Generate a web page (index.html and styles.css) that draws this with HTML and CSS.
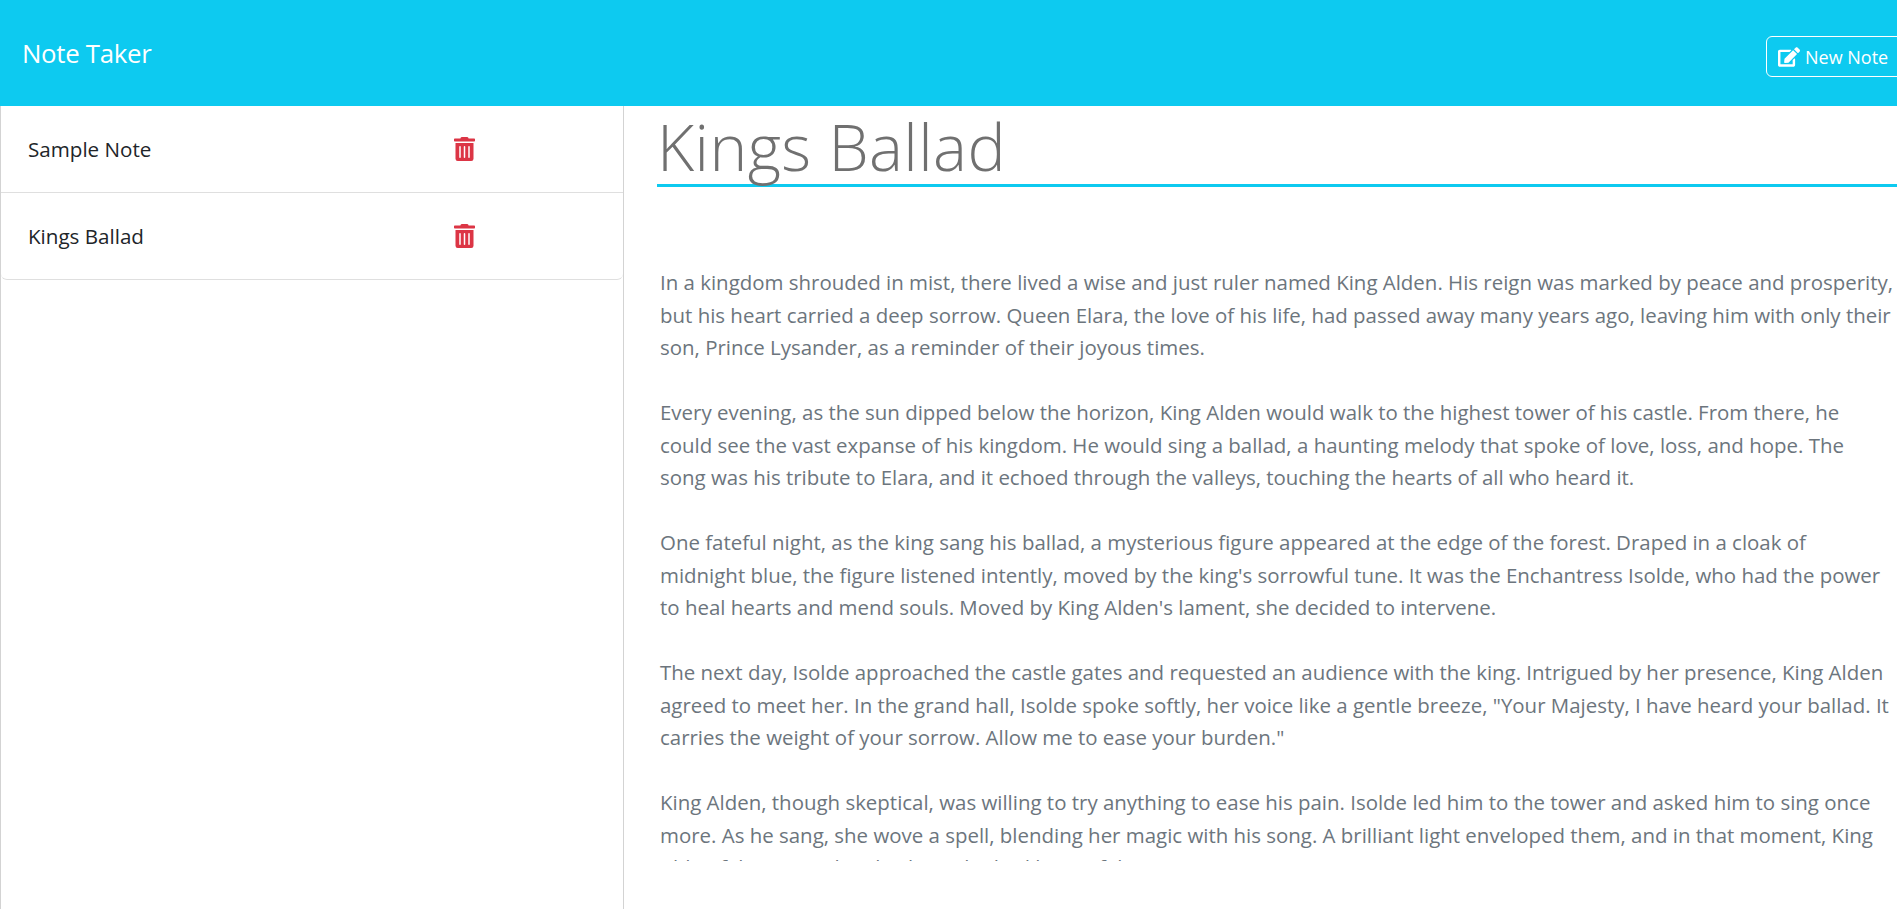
FILE: index.html
```html
<!doctype html>
<html lang="en">
  <head>
    <meta charset="utf-8" />
    <meta name="viewport" content="width=device-width" />
    <title>Note Taker</title>
    <link rel="stylesheet" href="styles.css">
  </head>
  <body>
    <nav class="navbar">
      <a class="brand" href="#">Note Taker</a>
      <button class="new-note" type="button">
        <svg class="icon-pen" viewBox="0 0 576 512" aria-hidden="true">
          <path fill="currentColor" d="M402.6 83.2l90.2 90.2c3.8 3.8 3.8 10 0 13.8L274.4 405.6l-92.8 10.3c-12.4 1.4-22.9-9.1-21.5-21.5l10.3-92.8L388.8 83.2c3.8-3.8 10-3.8 13.8 0zm162-22.9l-48.8-48.8c-15.2-15.2-39.9-15.2-55.2 0l-35.4 35.4c-3.8 3.8-3.8 10 0 13.8l90.2 90.2c3.8 3.8 10 3.8 13.8 0l35.4-35.4c15.2-15.3 15.2-40 0-55.2zM384 346.2V448H64V128h229.8c3.2 0 6.2-1.3 8.5-3.5l40-40c7.6-7.6 2.2-20.5-8.5-20.5H48C21.5 64 0 85.5 0 112v352c0 26.5 21.5 48 48 48h352c26.5 0 48-21.5 48-48V306.2c0-10.7-12.9-16-20.5-8.5l-40 40c-2.2 2.3-3.5 5.3-3.5 8.5z"/>
        </svg>
        New Note
      </button>
    </nav>
    <div class="content">
      <aside class="sidebar">
        <ul class="note-list">
          <li class="note-item">
            <span class="note-name">Sample Note</span>
            <svg class="icon-trash" viewBox="0 0 448 512" aria-hidden="true">
              <path fill="currentColor" d="M32 464a48 48 0 0 0 48 48h288a48 48 0 0 0 48-48V128H32zm272-256a16 16 0 0 1 32 0v224a16 16 0 0 1-32 0zm-96 0a16 16 0 0 1 32 0v224a16 16 0 0 1-32 0zm-96 0a16 16 0 0 1 32 0v224a16 16 0 0 1-32 0zM432 32H312l-9.4-18.7A24 24 0 0 0 281.1 0H166.8a23.72 23.72 0 0 0-21.4 13.3L136 32H16A16 16 0 0 0 0 48v32a16 16 0 0 0 16 16h416a16 16 0 0 0 16-16V48a16 16 0 0 0-16-16z"/>
            </svg>
          </li>
          <li class="note-item">
            <span class="note-name">Kings Ballad</span>
            <svg class="icon-trash" viewBox="0 0 448 512" aria-hidden="true">
              <path fill="currentColor" d="M32 464a48 48 0 0 0 48 48h288a48 48 0 0 0 48-48V128H32zm272-256a16 16 0 0 1 32 0v224a16 16 0 0 1-32 0zm-96 0a16 16 0 0 1 32 0v224a16 16 0 0 1-32 0zm-96 0a16 16 0 0 1 32 0v224a16 16 0 0 1-32 0zM432 32H312l-9.4-18.7A24 24 0 0 0 281.1 0H166.8a23.72 23.72 0 0 0-21.4 13.3L136 32H16A16 16 0 0 0 0 48v32a16 16 0 0 0 16 16h416a16 16 0 0 0 16-16V48a16 16 0 0 0-16-16z"/>
            </svg>
          </li>
        </ul>
      </aside>
      <main class="editor">
        <h1 class="note-title">Kings Ballad</h1>
        <div class="note-body">
          <p>In a kingdom shrouded in mist, there lived a wise and just ruler named King Alden. His reign was marked by peace and prosperity,<br>but his heart carried a deep sorrow. Queen Elara, the love of his life, had passed away many years ago, leaving him with only their<br>son, Prince Lysander, as a reminder of their joyous times.</p>
          <p>Every evening, as the sun dipped below the horizon, King Alden would walk to the highest tower of his castle. From there, he<br>could see the vast expanse of his kingdom. He would sing a ballad, a haunting melody that spoke of love, loss, and hope. The<br>song was his tribute to Elara, and it echoed through the valleys, touching the hearts of all who heard it.</p>
          <p>One fateful night, as the king sang his ballad, a mysterious figure appeared at the edge of the forest. Draped in a cloak of<br>midnight blue, the figure listened intently, moved by the king's sorrowful tune. It was the Enchantress Isolde, who had the power<br>to heal hearts and mend souls. Moved by King Alden's lament, she decided to intervene.</p>
          <p>The next day, Isolde approached the castle gates and requested an audience with the king. Intrigued by her presence, King Alden<br>agreed to meet her. In the grand hall, Isolde spoke softly, her voice like a gentle breeze, "Your Majesty, I have heard your ballad. It<br>carries the weight of your sorrow. Allow me to ease your burden."</p>
          <p>King Alden, though skeptical, was willing to try anything to ease his pain. Isolde led him to the tower and asked him to sing once<br>more. As he sang, she wove a spell, blending her magic with his song. A brilliant light enveloped them, and in that moment, King<br>Alden felt a warmth in his heart he had lost. It felt i</p>
        </div>
      </main>
    </div>
  </body>
</html>
```

FILE: styles.css
```css
*, *::before, *::after {
  box-sizing: border-box;
}

html, body {
  margin: 0;
  padding: 0;
  height: 100%;
  overflow: hidden;
}

body {
  font-family: "Open Sans", "Liberation Sans", sans-serif;
  color: #212529;
  background: #fff;
}

.navbar {
  display: flex;
  justify-content: space-between;
  align-items: center;
  width: 1897px;
  height: 106px;
  padding-left: 22px;
  background: #0dcaf0;
}

.brand {
  color: #fff;
  font-size: 25.8px;
  text-decoration: none;
  letter-spacing: -0.3px;
}

.new-note {
  display: flex;
  align-items: center;
  gap: 5px;
  width: 138px;
  height: 41px;
  margin-top: 7px;
  margin-right: -7px;
  padding: 0 0 0 11px;
  border: 1px solid #fff;
  border-radius: 6px;
  background: transparent;
  color: #fff;
  font-family: inherit;
  font-size: 18px;
}

.icon-pen {
  width: 22px;
  height: 20px;
}

.content {
  display: flex;
  height: 803px;
}

.sidebar {
  width: 624px;
  flex-shrink: 0;
  border-left: 1px solid #d3d3d3;
  border-right: 1px solid #d3d3d3;
}

.note-list {
  margin: 0;
  padding: 0;
  list-style: none;
  border-bottom: 1px solid #dfdfdf;
  border-radius: 0 0 6px 6px;
}

.note-item {
  display: flex;
  align-items: center;
  height: 86px;
  padding-left: 27px;
  font-size: 20.6px;
}

.note-item + .note-item {
  border-top: 1px solid #dfdfdf;
  height: 87px;
}

.note-name {
  width: 426px;
}

.icon-trash {
  width: 21px;
  height: 24px;
  color: #dc3545;
}

.editor {
  flex: 1;
  padding-left: 33px;
  min-width: 0;
  overflow: hidden;
}

/* the rule is a shadow so the g can sit on it without overflowing the box */
.note-title {
  margin: 0;
  height: 81px;
  box-shadow: inset 0 -3px #0dcaf0;
  color: #707070;
  font-size: 64px;
  font-weight: 300;
  line-height: 81px;
  letter-spacing: 0.4px;
  white-space: nowrap;
}

.note-body {
  height: 674px;
  padding-top: 79px;
  padding-left: 3px;
  color: #6c757d;
  font-size: 20.46px;
  line-height: 32.5px;
  white-space: nowrap;
  overflow: hidden;
}

.note-body p {
  margin: 0 0 32.5px;
}
```
